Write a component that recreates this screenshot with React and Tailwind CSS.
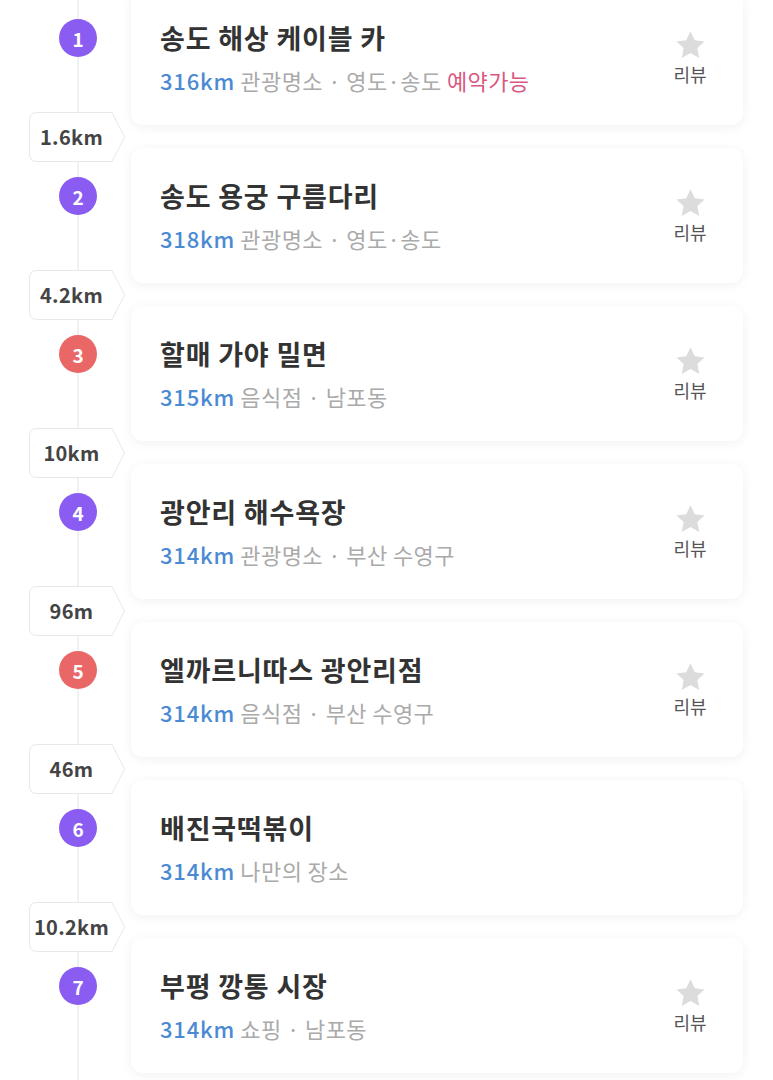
const PURPLE = 'bg-[#8b5cf1]'
const RED = 'bg-[#ea6767]'

const places = [
  { n: 1, color: PURPLE, name: '송도 해상 케이블 카', dist: '316km', info: '관광명소 · 영도·송도', tag: '예약가능', review: true, next: '1.6km' },
  { n: 2, color: PURPLE, name: '송도 용궁 구름다리', dist: '318km', info: '관광명소 · 영도·송도', review: true, next: '4.2km' },
  { n: 3, color: RED, name: '할매 가야 밀면', dist: '315km', info: '음식점 · 남포동', review: true, next: '10km' },
  { n: 4, color: PURPLE, name: '광안리 해수욕장', dist: '314km', info: '관광명소 · 부산 수영구', review: true, next: '96m' },
  { n: 5, color: RED, name: '엘까르니따스 광안리점', dist: '314km', info: '음식점 · 부산 수영구', review: true, next: '46m' },
  { n: 6, color: PURPLE, name: '배진국떡볶이', dist: '314km', info: '나만의 장소', review: false, next: '10.2km' },
  { n: 7, color: PURPLE, name: '부평 깡통 시장', dist: '314km', info: '쇼핑 · 남포동', review: true },
]

function StarIcon() {
  return (
    <svg width="31" height="30" viewBox="0 0 24 23" fill="#dcdcdc">
      <path d="M12 0.8l3.3 7 7.6.9-5.6 5.2 1.5 7.6L12 17.7l-6.8 3.8 1.5-7.6L1.1 8.7l7.6-.9z" />
    </svg>
  )
}

function DistancePill({ label }) {
  return (
    <div className="relative ml-[29px] w-[97px] h-[50px] flex items-center justify-center pr-[12px]">
      <svg className="absolute inset-0" width="97" height="50" viewBox="0 0 97 50">
        <path d="M8 0.5 H83 L95.5 25 L83 49.5 H8 Q0.5 49.5 0.5 42 V8 Q0.5 0.5 8 0.5 Z" fill="#fff" stroke="#e8e8e8" strokeWidth="1" />
      </svg>
      <span className="relative text-[20px] tracking-[0.3px] font-bold text-[#444] leading-none">{label}</span>
    </div>
  )
}

function PlaceRow({ p }) {
  return (
    <div className="flex">
      <div className="w-[131px] shrink-0 pt-[29px]">
        <div className={`ml-[59px] w-[38px] h-[38px] rounded-full ${p.color} flex items-center justify-center text-white text-[19px] font-bold leading-none`}>
          {p.n}
        </div>
      </div>
      <div className="w-[612px] h-[135px] bg-white rounded-[12px] shadow-[0_2px_12px_rgba(0,0,0,0.06)] flex items-start pl-[29px] pr-[33px]">
        <div className="flex-1 pt-[29px]">
          <div className="text-[27px] tracking-[0.8px] leading-[38px] font-bold text-[#333]">{p.name}</div>
          <div className="mt-[8px] text-[22px] tracking-[0.4px] leading-[30px] text-[#aaa]">
            <span className="text-[#4b8ad3] font-medium tracking-[0.8px]">{p.dist}</span> {p.info}
            {p.tag && <span className="text-[#d9587f]"> {p.tag}</span>}
          </div>
        </div>
        {p.review && (
          <div className="w-[40px] pt-[40px] flex flex-col items-center">
            <StarIcon />
            <div className="mt-[1px] whitespace-nowrap text-[18px] leading-[26px] text-[#555]">리뷰</div>
          </div>
        )}
      </div>
    </div>
  )
}

export default function App() {
  return (
    <div className="relative w-[773px] h-[1080px] overflow-hidden bg-white font-['Noto_Sans_CJK_KR',sans-serif]">
      <div className="absolute left-[77px] top-0 bottom-0 w-[2px] bg-[#f1f1f1]" />
      <div className="relative mt-[-10px] flex flex-col">
        {places.map(p => (
          <div key={p.n}>
            <PlaceRow p={p} />
            {p.next && (
              <div className="h-[23px] flex items-center">
                <DistancePill label={p.next} />
              </div>
            )}
          </div>
        ))}
      </div>
    </div>
  )
}
